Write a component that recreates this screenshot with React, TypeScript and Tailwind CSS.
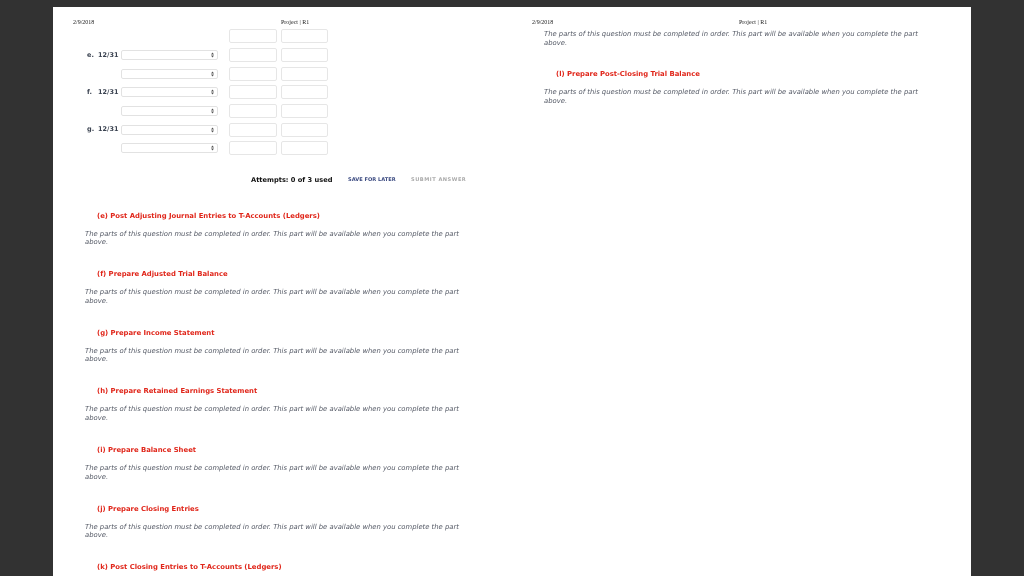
const NOTICE = 'The parts of this question must be completed in order. This part will be available when you complete the part above.';

const rows = [
  { label: '', select: false },
  { label: 'e.', select: true },
  { label: '', select: true },
  { label: 'f.', select: true },
  { label: '', select: true },
  { label: 'g.', select: true },
  { label: '', select: true },
];

const sections = [
  '(e) Post Adjusting Journal Entries to T-Accounts (Ledgers)',
  '(f) Prepare Adjusted Trial Balance',
  '(g) Prepare Income Statement',
  '(h) Prepare Retained Earnings Statement',
  '(i) Prepare Balance Sheet',
  '(j) Prepare Closing Entries',
];

function PageHeader({ dateClass }: { dateClass: string }) {
  return (
    <div className="flex h-[8px] items-center pl-[20px] font-['Liberation_Serif',serif] text-[6px] leading-[8px] text-[#222222]">
      <span className={dateClass}>2/9/2018</span>
      <span>Project | R1</span>
    </div>
  );
}

function FakeSelect() {
  return (
    <div className="flex h-[10px] w-[97px] items-center justify-end rounded-[2px] border border-[#e2e2e2] bg-white pr-[3px]">
      <svg width="3" height="6" viewBox="0 0 3 6">
        <path d="M1.5 0.5L3 2.5H0Z M1.5 5.5L0 3.5H3Z" fill="#555555" />
      </svg>
    </div>
  );
}

function Notice() {
  return (
    <p className="w-[378px] font-['DejaVu_Sans',sans-serif] text-[6.82px] leading-[8.7px] text-[#555a66] italic">{NOTICE}</p>
  );
}

function Heading({ title }: { title: string }) {
  return (
    <h3 className="h-[19px] pl-[12px] font-['DejaVu_Sans',sans-serif] text-[6.85px] leading-[10px] font-bold text-[#e0261a]">{title}</h3>
  );
}

function Section({ title }: { title: string }) {
  return (
    <div className="h-[58.6px]">
      <Heading title={title} />
      <Notice />
    </div>
  );
}

export default function App() {
  return (
    <div className="flex h-[576px] w-[1024px] justify-center overflow-hidden bg-[#323232] pt-[7px]">
      <div className="flex h-[569px] w-[918px] bg-white">
        <div className="w-[459px] pt-[11px] blur-[0.25px]">
          <PageHeader dateClass="w-[208px]" />
          <div className="mt-[1px] flex flex-col pl-[34px]">
            {rows.map((row, i) => (
              <div key={i} className="flex h-[18.67px] items-center">
                <span className="flex w-[34px] gap-[4px] pt-[1px] font-['DejaVu_Sans',sans-serif] text-[6.5px] font-bold text-[#3a4250]">
                  {row.label && <span className="w-[7px]">{row.label}</span>}
                  {row.label && <span>12/31</span>}
                </span>
                <div className="w-[108px]">{row.select && <FakeSelect />}</div>
                <div className="flex gap-[4px]">
                  <div className="h-[14px] w-[48px] rounded-[2px] border-[1.5px] border-[#e6e6e6]" />
                  <div className="h-[14px] w-[47px] rounded-[2px] border-[1.5px] border-[#e6e6e6]" />
                </div>
              </div>
            ))}
          </div>
          <div className="mt-[17px] flex items-center pl-[198px] font-['DejaVu_Sans',sans-serif]">
            <span className="w-[97px] text-[6.67px] font-bold text-[#111111]">Attempts: 0 of 3 used</span>
            <span className="w-[63px] text-[5.1px] font-bold text-[#3b4a80]">SAVE FOR LATER</span>
            <span className="text-[5.1px] font-bold tracking-[0.5px] text-[#aaaaaa]">SUBMIT ANSWER</span>
          </div>
          <div className="mt-[26px] pl-[32px]">
            {sections.map((title) => (
              <Section key={title} title={title} />
            ))}
            <Heading title="(k) Post Closing Entries to T-Accounts (Ledgers)" />
          </div>
        </div>
        <div className="w-[459px] pt-[11px] blur-[0.25px]">
          <PageHeader dateClass="w-[207px]" />
          <div className="pl-[32px]">
            <div className="mt-[4px] h-[32px]">
              <Notice />
            </div>
            <div className="mt-[7px]">
              <Section title="(l) Prepare Post-Closing Trial Balance" />
            </div>
          </div>
        </div>
      </div>
    </div>
  );
}
